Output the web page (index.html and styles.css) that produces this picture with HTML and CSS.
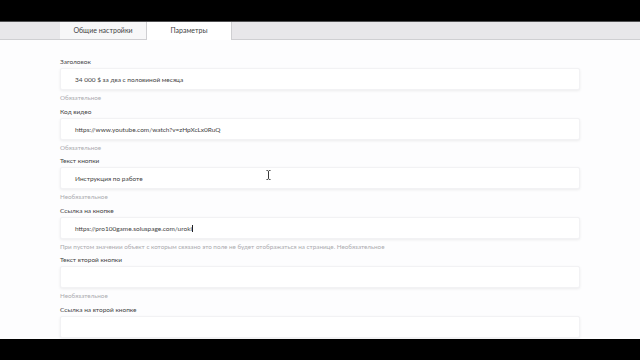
FILE: index.html
```html
<!DOCTYPE html>
<html lang="ru">
  <head>
    <meta charset="UTF-8" />
    <meta name="viewport" content="width=device-width, initial-scale=1.0" />
    <title>Параметры</title>
    <link rel="stylesheet" href="styles.css">
  </head>
  <body>
    <div class="screen">
      <div class="tabs">
        <div class="tab">Общие настройки</div>
        <div class="tab active">Параметры</div>
      </div>

      <div class="form">
        <div class="field">
          <div class="label">Заголовок</div>
          <div class="input">34 000 $ за два с половиной месяца</div>
          <div class="hint">Обязательное</div>
        </div>
        <div class="field">
          <div class="label">Код видео</div>
          <div class="input">https://www.youtube.com/watch?v=zHpXcLx0RuQ</div>
          <div class="hint">Обязательное</div>
        </div>
        <div class="field">
          <div class="label">Текст кнопки</div>
          <div class="input">Инструкция по работе</div>
          <div class="hint">Необязательное</div>
        </div>
        <div class="field">
          <div class="label">Ссылка на кнопке</div>
          <div class="input">https://pro100game.soluspage.com/uroki<span class="caret"></span></div>
          <div class="hint">При пустом значении объект с которым связано это поле не будет отображаться на странице. Необязательное</div>
        </div>
        <div class="field">
          <div class="label">Текст второй кнопки</div>
          <div class="input"></div>
          <div class="hint">Необязательное</div>
        </div>
        <div class="field">
          <div class="label">Ссылка на второй кнопке</div>
          <div class="input"></div>
        </div>
      </div>

      <svg class="ibeam" width="5" height="10" viewBox="0 0 5 10">
        <path d="M0.5 0.5h1.2l0.8 0.8l0.8-0.8h1.2M2.5 1.3v7.4M0.5 9.5h1.2l0.8-0.8l0.8 0.8h1.2" fill="none" stroke="#222" stroke-width="0.9"/>
      </svg>
    </div>
  </body>
</html>
```

FILE: styles.css
```css
body {
  margin: 0;
  background-color: #000;
  font-family: Lato, "Open Sans", sans-serif;
}
.screen {
  position: relative;
  margin-top: 21px;
  height: 318px;
  overflow: hidden;
  background-color: #fdfdfe;
}
.tabs {
  display: flex;
  height: 17px;
  padding-left: 60px;
  background-color: #e8e7ea;
  border-top: 1px solid #505052;
  border-bottom: 1px solid #cfcfd2;
}
.tab {
  width: 86px;
  height: 17px;
  line-height: 16px;
  text-align: center;
  font-size: 7px;
  color: #444;
  background-color: #f7f7f8;
}
.tab.active {
  width: 84px;
  height: 18px;
  background-color: #fff;
  border-left: 1px solid #cfcfd2;
  border-right: 1px solid #cfcfd2;
}
.form {
  padding: 17px 60px 0 60px;
}
.field {
  margin-bottom: 3.5px;
}
.label {
  font-size: 6.5px;
  line-height: 10px;
  margin-bottom: 1px;
  color: #444;
}
.input {
  height: 22px;
  line-height: 22px;
  padding-left: 14px;
  font-size: 6.5px;
  color: #444;
  background-color: #fff;
  border: 1px solid #f2f2f4;
  border-radius: 2px;
  box-shadow: 0 1px 3px rgba(0, 0, 0, 0.07);
  box-sizing: border-box;
}
.caret {
  display: inline-block;
  width: 0.6px;
  height: 7px;
  vertical-align: -1px;
  background-color: #222;
}
.hint {
  margin-top: 3px;
  font-size: 6.3px;
  line-height: 10px;
  color: #ababaf;
}
.ibeam {
  position: absolute;
  left: 266px;
  top: 149px;
}
```
